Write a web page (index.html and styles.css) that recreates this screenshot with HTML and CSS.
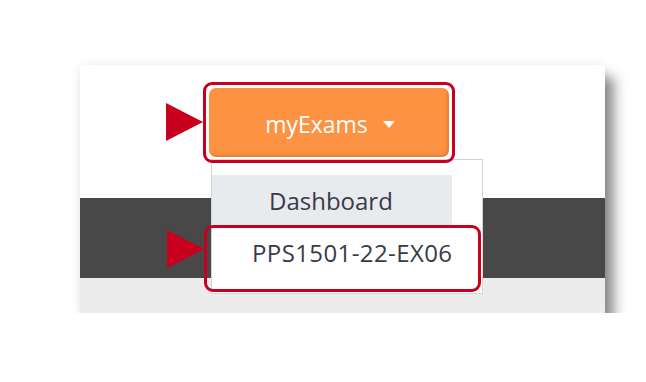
FILE: index.html
```html
<!DOCTYPE html>
<html lang="en">
<head>
  <meta charset="UTF-8" />
  <title>myExams menu</title>
  <link rel="stylesheet" href="styles.css">
</head>
<body>

  <div class="shot">
    <!-- top bar with the exams button -->
    <div class="shot-top">
      <div class="menu-wrap">
        <span class="pointer pointer-btn"></span>
        <div class="mark mark-btn">
          <button class="exams-btn">myExams <span class="caret"></span></button>
        </div>

        <!-- open dropdown -->
        <div class="dropdown">
          <div class="dropdown-item active">Dashboard</div>
          <span class="pointer pointer-item"></span>
          <div class="mark mark-item">
            <div class="dropdown-item">PPS1501-22-EX06</div>
          </div>
        </div>
      </div>
    </div>
    <div class="shot-band"></div>
    <div class="shot-foot"></div>
  </div>

</body>
</html>
```

FILE: styles.css
```css
* {
  box-sizing: border-box;
}

body {
  margin: 0;
  background-color: #fff;
  font-family: 'Open Sans', 'Segoe UI', sans-serif;
}

.shot {
  width: 525px;
  margin: 65px 0 0 80px;
  display: flex;
  flex-direction: column;
  background-color: #fff;
  box-shadow: 9px 12px 12px rgba(0, 0, 0, 0.45), 0 0 10px rgba(0, 0, 0, 0.08);
}

.shot-top {
  height: 133px;
  padding: 17px 0 0 123px;
}

.shot-band {
  height: 80px;
  background-color: #484848;
}

.shot-foot {
  height: 35px;
  background-color: #ececec;
}

.menu-wrap {
  position: relative;
  width: 252px;
}

/* red annotation boxes */
.mark {
  border: 3px solid #c8001e;
  border-radius: 9px;
  padding: 3px;
}

.mark-btn {
  position: relative;
  z-index: 2;
}

.exams-btn {
  display: flex;
  align-items: center;
  justify-content: center;
  gap: 15px;
  width: 100%;
  height: 69px;
  padding: 3px 0 0 2px;
  background-color: #fd9243;
  color: #fff;
  border: none;
  border-radius: 7px;
  box-shadow: inset -2px -2px 3px rgba(0, 0, 0, 0.12);
  font-family: 'Open Sans', 'Segoe UI', sans-serif;
  font-size: 23px;
}

.caret {
  width: 0;
  height: 0;
  border-left: 6px solid transparent;
  border-right: 6px solid transparent;
  border-top: 7px solid #fff;
}

/* red pointers */
.pointer {
  position: absolute;
  width: 0;
  height: 0;
  border-top: 19px solid transparent;
  border-bottom: 19px solid transparent;
  border-left: 37px solid #c8001e;
}

.pointer-btn {
  left: -37px;
  top: 21px;
}

.pointer-item {
  left: -45px;
  top: 70px;
}

.dropdown {
  position: absolute;
  left: 8px;
  top: 77px;
  width: 272px;
  height: 135px;
  padding-top: 15px;
  background-color: #fff;
  border: 1px solid #d4d4d4;
  z-index: 1;
}

.dropdown-item {
  height: 50px;
  padding: 0 0 0 47px;
  display: flex;
  align-items: center;
  font-size: 24px;
  color: #3a3a48;
}

.dropdown-item.active {
  width: 240px;
  padding-left: 57px;
  background-color: #e8ebee;
}

.mark-item {
  position: relative;
  margin-left: -8px;
  width: 277px;
  height: 67px;
  padding: 0;
}

.mark-item .dropdown-item {
  height: 55px;
  padding-left: 45px;
  padding-bottom: 6px;
  letter-spacing: 0.4px;
}
```
